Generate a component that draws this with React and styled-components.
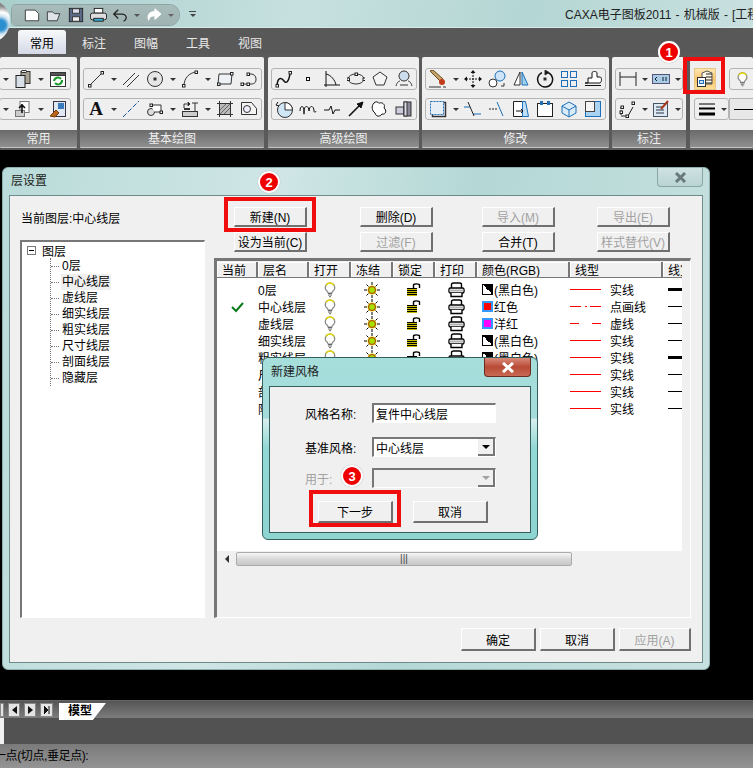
import styled, { createGlobalStyle } from "styled-components"

const GlobalStyle = createGlobalStyle`
    html, body {
        margin: 0;
        padding: 0;
        background: #000;
    }
    body {
        font-family: "Liberation Sans", "Noto Sans CJK SC", sans-serif;
        font-size: 12px;
    }
    * {
        box-sizing: border-box;
    }
`

const Page = styled.div`
    position: relative;
    width: 753px;
    height: 768px;
    overflow: hidden;
    display: flex;
    flex-direction: column;
    background: #000;
`

/* title bar */
const TitleBar = styled.div`
    position: relative;
    height: 28px;
    display: flex;
    align-items: center;
    justify-content: flex-end;
    background: linear-gradient(100deg, #a9cfcd 0%, #c6e0df 40%, #b4d6d4 70%, #c8e0df 100%);
    border-bottom: 1px solid #d8e8e8;
    white-space: nowrap;
    overflow: hidden;
`
const AppTitle = styled.div`
    width: 188px;
    padding-top: 2px;
    color: #222;
    line-height: 16px;
    word-spacing: 0.8px;
    overflow: hidden;
`
const Orb = styled.div`
    position: absolute;
    left: -28px;
    top: 0;
    width: 38px;
    height: 42px;
    border-radius: 50%;
    background: radial-gradient(circle at 75% 60%, #2b8fd0 0 5px, #cfe3f0 9px, #fff 13px, #8a8a8a 19px);
    z-index: 3;
`
const QuickBar = styled.div`
    display: flex;
    align-items: center;
    position: absolute;
    left: 12px;
    top: 5px;
    width: 167px;
    height: 20px;
    padding-left: 9px;
    border-radius: 4px 10px 10px 4px;
    background: linear-gradient(#a7bcbb, #9fb3b2);
    box-shadow: 0 0 0 1px #8fa5a4;
`
const QuickSlot = styled.div`
    width: ${p => p.$w || 22}px;
    height: 20px;
    display: flex;
    align-items: center;
    justify-content: center;
`
const MiniCaret = styled.span`
    width: 0;
    height: 0;
    border-left: 3px solid transparent;
    border-right: 3px solid transparent;
    border-top: 3px solid ${p => p.$c || "#333"};
`
const Customize = styled.div`
    position: absolute;
    left: 189px;
    top: 11px;
    width: 7px;
    border-top: 1px solid #444;
    padding-top: 2px;
    display: flex;
    justify-content: center;
`

/* tabs */
const TabBar = styled.div`
    height: 26px;
    display: flex;
    align-items: flex-end;
    padding-left: 16px;
    background: #585858;
`
const Tab = styled.div`
    width: 52px;
    height: 24px;
    display: flex;
    align-items: center;
    justify-content: center;
    position: relative;
    color: #e8e8e8;
    &::before {
        content: "";
        display: ${p => (p.$active ? "block" : "none")};
        position: absolute;
        left: 2px;
        right: 2px;
        top: 0;
        bottom: 0;
        border-radius: 3px 3px 0 0;
        background: linear-gradient(#f7f9fb, #d5d9e6);
    }
`
const TabLabel = styled.span`
    position: relative;
    color: ${p => (p.$active ? "#000" : "#e8e8e8")};
`

/* ribbon */
const Ribbon = styled.div`
    height: 96px;
    display: flex;
    padding: 3px 0 2px;
    background: #5a5a5a;
    flex: none;
`
const Panel = styled.div`
    width: ${p => p.$w}px;
    margin-left: ${p => p.$ml || 0}px;
    flex: none;
    display: flex;
    flex-direction: column;
    background: #efefef;
    border-radius: 2px;
    overflow: hidden;
    box-shadow: inset 0 -1px 0 #c4c4c4;
`
const PanelBody = styled.div`
    flex: 1;
    padding: 11px ${p => p.$pr || 0}px 0 ${p => p.$pl || 0}px;
    display: flex;
    flex-direction: column;
    align-items: ${p => (p.$end ? "flex-end" : "flex-start")};
    gap: 8px;
`
const PanelLabel = styled.div`
    height: 17px;
    margin-bottom: 1px;
    display: flex;
    align-items: center;
    justify-content: center;
    color: #eee;
    line-height: 16px;
    background: linear-gradient(#6a6a6a, #8f8f8f);
`
const IconRow = styled.div`
    display: flex;
    align-items: center;
    height: 22px;
    gap: ${p => p.$gap || 0}px;
`
const ToolGroup = styled.div`
    display: flex;
    align-items: center;
    height: 22px;
    border: 1px solid #b4b4b4;
    border-radius: 3px;
`
const Slot = styled.div`
    width: 24px;
    height: 20px;
    margin: 0 ${p => p.$m || 0}px;
    display: flex;
    align-items: center;
    justify-content: center;
`
const CaretSlot = styled.div`
    width: ${p => (p.$narrow ? 9 : 11)}px;
    height: 20px;
    display: flex;
    align-items: center;
    justify-content: center;
`
const HotButton = styled.div`
    width: 22px;
    height: 22px;
    display: flex;
    align-items: center;
    justify-content: center;
    border: 1px solid #e8c888;
    background: linear-gradient(#fde6b0, #f9c36a 55%, #fde09a);
`
const LineSelect = styled.div`
    flex: 1;
    width: 60px;
    height: 22px;
    display: flex;
    align-items: center;
    padding-left: 4px;
    background: #e8e8e8;
    border: 1px solid #b4b4b4;
    &::after {
        content: "";
        width: 30px;
        border-top: 1px solid #000;
    }
`

/* canvas and bottom bars */
const Canvas = styled.div`
    flex: 1;
    background: #000;
`
const SheetBar = styled.div`
    height: 18px;
    display: flex;
    align-items: flex-start;
    padding-top: 2px;
    gap: 4px;
    background: linear-gradient(#555, #7c7c7c);
    border-top: 1px solid #666;
`
const SheetNav = styled.div`
    width: ${p => p.$w || 12}px;
    height: 14px;
    margin-left: ${p => p.$ml || 0}px;
    display: flex;
    align-items: center;
    justify-content: center;
    background: #e4e4e4;
    border: 1px solid #888;
    color: #111;
`
const SheetTab = styled.div`
    width: 47px;
    height: 17px;
    margin-left: 2px;
    padding-left: 9px;
    font-weight: 700;
    font-size: 12px;
    line-height: 16px;
    color: #000;
    background: #fff;
    clip-path: polygon(0 0, 100% 0, 72% 100%, 0 100%);
`
const CommandArea = styled.div`
    height: 26px;
    background: #525252;
    border-left: 4px solid #f0f0f0;
`
const StatusBar = styled.div`
    height: 24px;
    display: flex;
    align-items: center;
    padding-bottom: 3px;
    background: linear-gradient(#7a7a7a, #949494);
    color: #000;
    white-space: nowrap;
    letter-spacing: -0.4px;
`
const StatusText = styled.span`
    margin-left: -6px;
`

/* windows */
const Window = styled.div`
    position: absolute;
    left: ${p => p.$x}px;
    top: ${p => p.$y}px;
    width: ${p => p.$w}px;
    height: ${p => p.$h}px;
    display: flex;
    flex-direction: column;
    border-radius: 6px;
    padding: 0 ${p => p.$pad}px ${p => p.$pad}px;
    border: 1px solid ${p => p.$edge};
    background: ${p => p.$glass};
`
const WindowHead = styled.div`
    height: ${p => p.$h}px;
    flex: none;
    display: flex;
    align-items: center;
    padding-left: 2px;
    padding-bottom: 1px;
    color: #222;
    line-height: 16px;
`
const CloseButton = styled.div`
    position: absolute;
    top: 0;
    right: ${p => p.$right}px;
    width: ${p => p.$w}px;
    height: 19px;
    display: flex;
    align-items: center;
    justify-content: center;
    border-radius: 0 0 4px 4px;
    border: 1px solid ${p => (p.$red ? "#6d2a20" : "#8aa5a5")};
    border-top: none;
    background: ${p => (p.$red ? "linear-gradient(#d88a78, #b84a36 50%, #c86a54)" : "linear-gradient(#cfe2e2, #b9d3d3)")};
`
const Client = styled.div`
    flex: 1;
    background: #f0f0f0;
    border: 1px solid ${p => p.$edge};
`
const MainClient = styled(Client)`
    display: grid;
    grid-template-columns: 185px 477px;
    grid-template-rows: 1fr 44px;
    column-gap: 9px;
    padding: 0 10px 0 10px;
`
const LeftColumn = styled.div`
    display: flex;
    flex-direction: column;
    align-items: stretch;
`
const CurrentLayer = styled.div`
    height: 44px;
    padding: 15px 0 0 1px;
    line-height: 16px;
    color: #000;
`
const Sunken = styled.div`
    border-top: 2px solid #777;
    border-left: 2px solid #777;
    border-right: 1px solid #fff;
    border-bottom: 1px solid #fff;
`
const TreeBox = styled(Sunken)`
    flex: 1;
    background: #fff;
    padding: 0 0 0 4px;
`
const TreeRoot = styled.div`
    height: 16px;
    display: flex;
    align-items: center;
    gap: 5px;
    color: #000;
`
const Plus = styled.span`
    width: 9px;
    height: 9px;
    border: 1px solid #777;
    position: relative;
    background: #fff;
    margin-left: 1px;
    margin-right: 1px;
    &::after {
        content: "";
        position: absolute;
        left: 1px;
        right: 1px;
        top: 3px;
        border-top: 1px solid #000;
    }
`
const TreeList = styled.div`
    margin-left: 24px;
    border-left: 1px dotted #777;
`
const TreeItem = styled.div`
    height: 16px;
    display: flex;
    align-items: center;
    color: #000;
    &::before {
        content: "";
        width: 8px;
        margin-right: 2px;
        border-top: 1px dotted #777;
    }
`
const TreeText = styled.span`
    padding: 0 1px;
    background: ${p => (p.$sel ? "#efefef" : "transparent")};
    line-height: 16px;
`
const RightColumn = styled.div`
    display: flex;
    flex-direction: column;
`
const ButtonGrid = styled.div`
    display: grid;
    grid-template-columns: 126px 122px 115px 73px;
    grid-auto-rows: 20px;
    row-gap: 5px;
    padding: 11px 0 6px 20px;
`
const RaisedButton = styled.div`
    width: ${p => p.$w || 73}px;
    height: ${p => p.$h || 20}px;
    display: flex;
    align-items: center;
    justify-content: center;
    background: #f0f0f0;
    color: ${p => (p.$off ? "#a2a2a2" : "#000")};
    border-top: 1px solid #fff;
    border-left: 1px solid #fff;
    border-right: 2px solid #707070;
    border-bottom: 2px solid #707070;
    white-space: nowrap;
`
const TableFrame = styled(Sunken)`
    flex: 1;
    display: flex;
    flex-direction: column;
    border-top-width: 3px;
    border-left-width: 3px;
    overflow: hidden;
`
const TableView = styled.div`
    width: 465px;
    height: 289px;
    margin-top: 1px;
    overflow: hidden;
    background: #fff;
`
const TableGrid = styled.div`
    display: grid;
    grid-template-columns: 41px 51px 42px 42px 42px 42px 93px 93px 40px;
    grid-template-rows: 19px;
    grid-auto-rows: 17px;
    width: 486px;
    color: #000;
    white-space: nowrap;
`
const HeadCell = styled.div`
    height: 16px;
    display: flex;
    align-items: center;
    padding-left: 5px;
    background: #f0f0f0;
    border-right: 2px solid #777;
    border-bottom: 1px solid #777;
    box-shadow: inset 1px 1px 0 #fff;
    overflow: hidden;
`
const Cell = styled.div`
    display: flex;
    align-items: center;
    justify-content: ${p => (p.$center ? "center" : "flex-start")};
    gap: ${p => p.$gap || 0}px;
    padding-left: ${p => p.$pl || 0}px;
    height: 17px;
`
const Swatch = styled.span`
    width: 11px;
    height: 11px;
    flex: none;
    border: 2px solid ${p => p.$border || "#3399ff"};
    background: ${p => p.$fill};
`
const HalfSwatch = styled.span`
    width: 11px;
    height: 11px;
    flex: none;
    border: 1px solid #000;
    background: linear-gradient(to bottom left, #000 50%, #fff 50%);
`
const WeightLine = styled.span`
    width: 14px;
    margin-left: 5px;
    border-top: ${p => p.$w}px solid #000;
`
const LineType = styled.span`
    width: 31px;
    flex: none;
    display: block;
    height: 1px;
    background: ${p => p.$pattern};
`
const LineName = styled.span`
    margin-left: 9px;
`
const ScrollBar = styled.div`
    width: 465px;
    height: 15px;
    display: flex;
    align-items: center;
    background: #f0f0f0;
`
const ScrollArrow = styled.div`
    width: 19px;
    display: flex;
    justify-content: center;
`
const ArrowLeft = styled.span`
    border-top: 4px solid transparent;
    border-bottom: 4px solid transparent;
    border-right: 4px solid #333;
`
const ScrollThumb = styled.div`
    width: 336px;
    height: 14px;
    display: flex;
    align-items: center;
    justify-content: center;
    color: #444;
    font-size: 10px;
    letter-spacing: 0;
    border: 1px solid #aaa;
    border-radius: 2px;
    background: linear-gradient(#f6f6f6, #d8d8d8 50%, #c8c8c8);
`
const Footer = styled.div`
    grid-column: 1 / -1;
    display: flex;
    justify-content: flex-end;
    gap: 4px;
    padding-top: 10px;
`

/* second dialog */
const FormClient = styled(Client)`
    display: flex;
    flex-direction: column;
    padding: 16px 0 0 35px;
    background: #f0f0f0;
`
const FormRow = styled.div`
    display: flex;
    align-items: center;
    height: 20px;
    margin-bottom: ${p => p.$mb}px;
`
const FormLabel = styled.div`
    width: 67px;
    color: ${p => (p.$off ? "#a2a2a2" : "#000")};
`
const Field = styled(Sunken)`
    width: 124px;
    height: 20px;
    display: flex;
    align-items: center;
    justify-content: space-between;
    padding-left: 2px;
    background: ${p => (p.$off ? "#f0f0f0" : "#fff")};
    color: #000;
`
const SelectButton = styled.div`
    width: 17px;
    height: 17px;
    display: flex;
    align-items: center;
    justify-content: center;
    background: #f0f0f0;
    border-right: 2px solid #777;
    border-bottom: 2px solid #777;
`
const SelectArrow = styled.span`
    border-left: 4px solid transparent;
    border-right: 4px solid transparent;
    border-top: 4px solid ${p => (p.$off ? "#a2a2a2" : "#000")};
`
const FormButtons = styled.div`
    display: flex;
    gap: 20px;
    padding-left: 13px;
`

/* tutorial marks */
const RedBox = styled.div`
    position: absolute;
    left: ${p => p.$x}px;
    top: ${p => p.$y}px;
    width: ${p => p.$w}px;
    height: ${p => p.$h}px;
    border: 4px solid #f00d0d;
    z-index: 8;
`
const Badge = styled.div`
    position: absolute;
    left: ${p => p.$x - 11}px;
    top: ${p => p.$y - 11}px;
    width: 22px;
    height: 22px;
    display: flex;
    align-items: center;
    justify-content: center;
    border-radius: 50%;
    border: 2px solid #fff;
    box-shadow: 0 0 1px #999;
    background: #ee0000;
    color: #fff;
    font-weight: 700;
    font-size: 13px;
    z-index: 9;
`

const Svg = ({ size = 18, children }) => (
    <svg width={size} height={size} viewBox="0 0 18 18" fill="none" stroke="#333" strokeWidth="1">
        {children}
    </svg>
)

const Nodes = ({ pts }) => pts.map(([x, y], i) => <rect key={i} x={x - 1} y={y - 1} width="2.5" height="2.5" fill="#fff" stroke="#222" />)

const icons = {
    copy: <Svg><rect x="7" y="1.5" width="9" height="12" fill="#a9a394" /><rect x="2" y="5.5" width="9" height="12" fill="#d9dfe6" stroke="#222" /><rect x="8" y="0.5" width="4" height="2" fill="#eee" /></Svg>,
    refresh: <Svg><rect x="1.5" y="2.5" width="15" height="14" fill="#fff" stroke="#333" /><rect x="1.5" y="2.5" width="15" height="3" fill="#555" /><path d="M5 11a4 4 0 0 1 7-2M13 10a4 4 0 0 1-7 3" stroke="#1b9a2c" strokeWidth="2" /></Svg>,
    paste: <Svg><rect x="6" y="1.5" width="9" height="11" fill="#fff" stroke="#777" /><rect x="1.5" y="10.5" width="9" height="6" fill="#ccc" stroke="#777" /><path d="M8 4v9M5 8l3-3 3 3" stroke="#111" strokeWidth="1.6" /></Svg>,
    brush: <Svg><rect x="4.5" y="1.5" width="12" height="15" fill="#dfe8f2" stroke="#334" /><rect x="9" y="3" width="6" height="6" fill="#3a78c0" stroke="none" /><path d="M1 16l6-6 3 3-4 4z" fill="#b8641a" stroke="#7a3f0c" /></Svg>,
    line: <Svg><path d="M3 15L15 3" /><Nodes pts={[[2.5, 15.5], [15, 2.5]]} /></Svg>,
    dbl: <Svg><path d="M1 15L13 3M5 17L17 5" /></Svg>,
    circle: <Svg><circle cx="9" cy="9" r="7.5" fill="#e6e6e6" /><rect x="8" y="8" width="2" height="2" fill="#333" /></Svg>,
    arc: <Svg><path d="M3 16C3 8 8 3 15 2" /><Nodes pts={[[2.5, 15.5], [15, 2]]} /></Svg>,
    rect: <Svg><path d="M3 4h13l-1 10H2z" fill="#eef2f6" /><Nodes pts={[[2.5, 14], [15.5, 3.5]]} /></Svg>,
    link: <Svg><path d="M3 14h8c4 0 5-2 5-5s-2-5-5-5H9" /><Nodes pts={[[2, 14], [8, 14], [8, 4]]} /></Svg>,
    text: <span style={{ fontFamily: "Liberation Serif, serif", fontWeight: 700, fontSize: 19, lineHeight: "20px", color: "#111" }}>A</span>,
    dash: <Svg><path d="M1 17L17 1" stroke="#1c4f9a" strokeDasharray="5 2" /></Svg>,
    wheel: <Svg><circle cx="5" cy="12" r="3.5" fill="#ddd" /><path d="M5 5h10v7H8" fill="#fff" /><Nodes pts={[[15, 12], [5, 5]]} /></Svg>,
    tool: <Svg><rect x="1.5" y="11.5" width="15" height="5" fill="#ccc" /><path d="M3 8V4h3M11 3h6M14 3v8" /><path d="M3 9h6" strokeWidth="2" /><path d="M7 2l2 2-2 2z" fill="#111" /></Svg>,
    hatch: <Svg><rect x="3.5" y="3.5" width="11" height="11" fill="#bbb" /><path d="M3.5 1v16M14.5 1v16M1 3.5h16M1 14.5h16" /><path d="M4 10l6-6M4 14l10-10M8 14l6-6" stroke="#666" /></Svg>,
    block: <Svg><path d="M1.5 2.5h10l5 6v6h-15z" fill="#f4f4f4" /><circle cx="7" cy="9" r="3.5" fill="#eef" /></Svg>,
    curve: <Svg><path d="M2 15C3 6 7 8 9 11s5 1 6-8" strokeWidth="1.5" stroke="#111" /><Nodes pts={[[2, 15.5], [15, 2.5]]} /></Svg>,
    point: <Svg><rect x="7.5" y="7.5" width="3" height="3" fill="#fff" stroke="#111" /></Svg>,
    axes: <Svg><path d="M3 1v16M1 15h16M3 4c5 1 9 6 10 11" stroke="#111" /></Svg>,
    ellipse: <Svg><ellipse cx="9" cy="9" rx="8" ry="5" fill="#eee" /><Nodes pts={[[1, 9], [9, 4], [17, 9]]} /></Svg>,
    pentagon: <Svg><path d="M9 2l7 5-3 8H5L2 7z" fill="#f4f4f4" /></Svg>,
    bubble: <Svg><circle cx="9" cy="6" r="5" fill="#cde" /><path d="M1 16c1-4 3-5 4-5M17 16c-1-4-3-5-4-5M5 15h8" /></Svg>,
    spiral: <Svg><circle cx="10" cy="10" r="7.5" fill="#cfe6f6" /><path d="M10 2.5V10h7.5A7.5 7.5 0 0 0 10 2.5z" fill="#fff" /><path d="M3 2l-2 3 3 1" stroke="#111" /></Svg>,
    wave: <Svg><path d="M1 11c0-6 4-6 4 0s0 2 0 0c0-6 5-6 5 0 0-6 5-6 5 0 0 2 2 1 2 0" stroke="#111" /></Svg>,
    pulse: <Svg><path d="M1 10h5l2-4 2 8 2-4h5" stroke="#111" /></Svg>,
    needle: <Svg><path d="M2 16L12 6" stroke="#111" strokeWidth="1.6" /><path d="M10 4l4 4 2-6z" fill="#111" stroke="#111" /></Svg>,
    puzzle: <Svg><path d="M3 3c3-3 5 1 6 0s6 1 4 5c3 2 2 7-2 6-2 3-6 3-7-1-3-2-4-7-1-10z" fill="#fff" stroke="#111" /></Svg>,
    barrel: <Svg><rect x="1" y="7" width="8" height="7" fill="#ccd" /><rect x="9" y="2" width="7" height="14" fill="#889" /><rect x="9" y="2" width="3" height="14" fill="#dde" /></Svg>,
    pen: <Svg><path d="M1 1l10 10 3-2L4 0z" fill="#c6a46a" stroke="#6a4a1c" /><circle cx="13" cy="12" r="3" fill="#c33c1a" stroke="none" /><path d="M0 17h12M14 17h3" /></Svg>,
    move: <Svg><path d="M9 2v14M2 9h14" stroke="#111" strokeDasharray="2 1" /><path d="M9 0l2.5 3h-5zM9 18l2.5-3h-5zM0 9l3-2.5v5zM18 9l-3-2.5v5z" fill="#111" stroke="none" /></Svg>,
    scale: <Svg><circle cx="5" cy="13" r="4" fill="#fff" /><circle cx="12" cy="6" r="5" fill="#cfe4f6" stroke="#1c6fb8" /><path d="M13 16h3v-3" /></Svg>,
    mirror: <Svg><path d="M8 2L2 15h6z" fill="#fff" /><path d="M10 2l6 13h-6z" fill="#9fd0f0" stroke="#1c6fb8" /></Svg>,
    rotate: <Svg><path d="M12 2.5A7.5 7.5 0 1 1 6 2.6" strokeWidth="1.5" stroke="#111" /><path d="M9 0l4 2.5-4 2.5z" fill="#111" /><rect x="8" y="8" width="2" height="2" fill="#111" /></Svg>,
    array: <Svg><rect x="1.5" y="1.5" width="6" height="6" stroke="#1c6fb8" /><rect x="10.5" y="1.5" width="6" height="6" stroke="#1c6fb8" /><rect x="1.5" y="10.5" width="6" height="6" stroke="#1c6fb8" /><rect x="10.5" y="10.5" width="6" height="6" stroke="#1c6fb8" /></Svg>,
    cloud: <Svg><path d="M1 13h3V8h4V3c0-2 5-2 5 0v4h3c2 0 2 5 0 6z" fill="#fff" stroke="#111" /><path d="M1 15.5h16" stroke="#111" /></Svg>,
    frame: <Svg><rect x="3.5" y="2.5" width="13" height="14" fill="#eef" stroke="#333" strokeWidth="1.5" /><rect x="1.5" y="1.5" width="13" height="13" fill="#e8eef5" stroke="#1c6fb8" strokeDasharray="2 1" /></Svg>,
    trimL: <Svg><path d="M0 7h6M9 14h8" stroke="#1c6fb8" /><path d="M4 2l6 14" stroke="#222" /></Svg>,
    trimR: <Svg><path d="M1 9h8" stroke="#222" strokeDasharray="2 1" /><path d="M9 2l6 14" stroke="#1c6fb8" /></Svg>,
    doc: <Svg><path d="M1.5 1.5h9v15h-9z" fill="#fff" stroke="#222" /><path d="M10.5 1.5h3l3 15h-6z" fill="#bfe0f6" stroke="#1c6fb8" /><path d="M4 11h7M9 9l2 2-2 2" stroke="#111" /></Svg>,
    tray: <Svg><rect x="1.5" y="3.5" width="15" height="13" fill="#fff" stroke="#222" /><rect x="4" y="1" width="3" height="4" fill="#1c6fb8" stroke="none" /><rect x="11" y="1" width="3" height="4" fill="#1c6fb8" stroke="none" /></Svg>,
    cube: <Svg><path d="M2 6l7-4 7 4v7l-7 4-7-4z" fill="#d9ecf8" stroke="#1c6fb8" /><path d="M2 6l7 4 7-4M9 10v7" stroke="#1c6fb8" /></Svg>,
    corner: <Svg><rect x="1.5" y="1.5" width="15" height="15" fill="#a9d3f0" stroke="#1c6fb8" /><rect x="1.5" y="1.5" width="9" height="10" fill="#f4f4f4" stroke="#444" /></Svg>,
    dim: <Svg><path d="M1 2v14M17 2v14M1 7h16" stroke="#222" /></Svg>,
    dimNum: <Svg><rect x="0.5" y="4.5" width="17" height="9" fill="#a9cbe6" stroke="#557" /><path d="M5 7l-2 2 2 2M11 7v4M14 7v4" stroke="#123" /></Svg>,
    coords: <Svg><path d="M2 16h7l5-9" stroke="#222" /><path d="M2 7v9" stroke="#222" strokeDasharray="2 1" /><Nodes pts={[[2, 12], [3, 7], [8, 16], [14, 3]]} /></Svg>,
    note: <Svg><rect x="1.5" y="3.5" width="14" height="13" fill="#dfe9f4" stroke="#456" /><path d="M4 7h6M4 10h8M4 13h8" stroke="#234" /><path d="M9 9l7-8" stroke="#a8381c" strokeWidth="2" /></Svg>,
    layers: <Svg><path d="M6 8V3l5-2 5 2v11H9" fill="#fff8e4" stroke="#555" /><path d="M10 4h6M10 7h6M10 10h6M10 13h6" stroke="#222" /><rect x="1.5" y="7.5" width="8" height="9" fill="#fff" stroke="#333" /><rect x="3.5" y="10.5" width="4" height="3" fill="#cfe4f6" stroke="#1c6fb8" /></Svg>,
    weights: <Svg><path d="M1 4h16" stroke="#000" /><path d="M1 8.5h16" stroke="#000" strokeWidth="2" /><path d="M1 14h16" stroke="#000" strokeWidth="3" /></Svg>,
}

const Bulb = ({ size = 14 }) => (
    <svg width={size} height={size + 2} viewBox="0 0 12 16" fill="none">
        <path d="M6 1a4.5 4.5 0 0 0-3 8c.7.7 1 1.5 1 2h4c0-.5.3-1.3 1-2a4.5 4.5 0 0 0-3-8z" fill="#fff" stroke="#8a8a8a" strokeWidth="1.2" />
        <path d="M2 3.500A4.500 4.500 0 0 1 10 3.500" stroke="#e6d800" strokeWidth="1.400" />
        <path d="M4 11.500h4M4 13h4M5 14.700h2" stroke="#666" />
    </svg>
)
const Sun = ({ size = 16 }) => (
    <svg width={size} height={size} viewBox="0 0 16 16">
        <path d="M8 0v3M8 13v3M0 8h3M13 8h3M2.500 2.500l2 2M11.500 11.500l2 2M13.500 2.500l-2 2M4.500 11.500l-2 2" stroke="#000" strokeWidth="1" />
        <circle cx="8" cy="8" r="4.500" fill="#e8d800" />
        <circle cx="8" cy="8" r="3.500" fill="#a8e000" stroke="#a01010" strokeWidth="0.800" />
    </svg>
)
const Lock = () => (
    <svg width="14" height="13" viewBox="0 0 14 13">
        <rect x="0" y="5" width="10" height="8" fill="#000" />
        <path d="M0 6.500h10M0 8.500h10M0 10.500h10M0 12.500h10" stroke="#c8bc00" />
        <path d="M6.500 5V2c0-1.500 6-1.500 6 0v3" fill="none" stroke="#000" strokeWidth="1.400" />
    </svg>
)
const Printer = () => (
    <svg width="17" height="16" viewBox="0 0 17 16" fill="none" stroke="#000" strokeWidth="1.400">
        <path d="M3.500 6V2.500c0-1 1-1.500 2-1.500h6c1 0 2 .5 2 1.500V6" fill="#fff" />
        <rect x="1" y="6" width="15" height="5" rx="1.500" fill="#fff" />
        <rect x="1.500" y="7.500" width="14" height="2" fill="#b4b4b4" stroke="none" />
        <path d="M3 11v3.500h11V11" fill="#fff" />
    </svg>
)
const Check = () => (
    <svg width="14" height="12" viewBox="0 0 14 12" fill="none">
        <path d="M1 6l4 4 7-8" stroke="#0a7a1a" strokeWidth="2" />
    </svg>
)

const ToolIcons = ({ items }) =>
    items.map((name, i) =>
        name === "^" ? (
            <CaretSlot key={i}><MiniCaret /></CaretSlot>
        ) : name === "v" ? (
            <CaretSlot key={i} $narrow><MiniCaret /></CaretSlot>
        ) : (
            <Slot key={i}>{icons[name]}</Slot>
        )
    )

const quickIcons = {
    file: <Svg size={16}><path d="M1.5 3.5h11l4 4v8h-15z" fill="#fff" stroke="#333" /></Svg>,
    open: <Svg size={16}><path d="M1.5 5.5h6l2 2h6l-3 8h-11z" fill="#dfe4e8" stroke="#333" /></Svg>,
    save: <Svg size={16}><rect x="1.5" y="1.5" width="15" height="15" fill="#5a6a86" stroke="#222" /><rect x="5" y="2" width="8" height="5" fill="#dde" /><rect x="5" y="11" width="8" height="5" fill="#eee" /></Svg>,
    print: <Svg size={17}><rect x="4.5" y="1.5" width="9" height="5" fill="#fff" stroke="#222" /><rect x="0.5" y="6.5" width="17" height="7" rx="2" fill="#ddd" stroke="#222" /><rect x="4" y="12" width="10" height="3" fill="#3ab0d8" stroke="#222" /></Svg>,
    undo: <Svg size={16}><path d="M7 3L2 8l5 5M2 8h9c3 0 5 2 5 4s-1 3-3 4" stroke="#222" strokeWidth="1.5" /></Svg>,
    redo: <Svg size={16}><path d="M10 2l7 6-7 6v-4c-4 0-6 1-7 5-2-5 0-10 7-10z" fill="#fff" stroke="#fff" /></Svg>,
}

const rows = [
    { name: "0层", color: <><HalfSwatch />(黑白色)</>, line: "#f00", type: "实线", weight: 3, current: false },
    { name: "中心线层", color: <><Swatch $fill="#f00" />红色</>, line: "linear-gradient(to right, #f00 0 11px, transparent 11px 15px, #f00 15px 17px, transparent 17px 20px, #f00 20px 31px)", type: "点画线", weight: 1, current: true },
    { name: "虚线层", color: <><Swatch $fill="#f0f" />洋红</>, line: "linear-gradient(to right, #f00 0 9px, transparent 9px 22px, #f00 22px 31px)", type: "虚线", weight: 1 },
    { name: "细实线层", color: <><HalfSwatch />(黑白色)</>, line: "#f00", type: "实线", weight: 1 },
    { name: "粗实线层", color: <><HalfSwatch />(黑白色)</>, line: "#f00", type: "实线", weight: 3 },
    { name: "尺寸线层", color: <><Swatch $fill="#f00" />红色</>, line: "#f00", type: "实线", weight: 1 },
    { name: "剖面线层", color: <><Swatch $fill="#f00" />红色</>, line: "#f00", type: "实线", weight: 1 },
    { name: "隐藏层", color: <><Swatch $fill="#f00" />红色</>, line: "#f00", type: "实线", weight: 1 },
]

const treeNames = ["0层", "中心线层", "虚线层", "细实线层", "粗实线层", "尺寸线层", "剖面线层", "隐藏层"]
const columns = ["当前", "层名", "打开", "冻结", "锁定", "打印", "颜色(RGB)", "线型", "线宽"]

const LayerTable = () => (
    <TableView>
        <TableGrid>
            {columns.map(c => <HeadCell key={c}>{c}</HeadCell>)}
            {rows.map(r => [
                <Cell key={r.name + "c"} $center>{r.current && <Check />}</Cell>,
                <Cell key={r.name + "n"}>{r.name}</Cell>,
                <Cell key={r.name + "o"} $center><Bulb /></Cell>,
                <Cell key={r.name + "f"} $center><Sun /></Cell>,
                <Cell key={r.name + "l"} $center><Lock /></Cell>,
                <Cell key={r.name + "p"} $center><Printer /></Cell>,
                <Cell key={r.name + "r"} $pl={5} $gap={1}>{r.color}</Cell>,
                <Cell key={r.name + "t"}><LineType $pattern={r.line} /><LineName>{r.type}</LineName></Cell>,
                <Cell key={r.name + "w"}><WeightLine $w={r.weight} /></Cell>,
            ])}
        </TableGrid>
    </TableView>
)

const NewStyleDialog = () => (
    <Window $x={259} $y={189} $w={276} $h={183} $pad={6} $edge="#33605f" $glass="linear-gradient(#a6dedc, #a3dcda 33%, #d6eeec 34%, #92d8d5 50%, #8ed5d2)">
        <WindowHead $h={28}>新建风格</WindowHead>
        <CloseButton $red $right={6} $w={47}>
            <svg width="14" height="11" viewBox="0 0 14 11"><path d="M2 1l10 9M12 1L2 10" stroke="#fff" strokeWidth="3" /></svg>
        </CloseButton>
        <FormClient $edge="#33605f">
            <FormRow $mb={14}>
                <FormLabel>风格名称:</FormLabel>
                <Field>复件中心线层</Field>
            </FormRow>
            <FormRow $mb={11}>
                <FormLabel>基准风格:</FormLabel>
                <Field>中心线层<SelectButton><SelectArrow /></SelectButton></Field>
            </FormRow>
            <FormRow $mb={13}>
                <FormLabel $off>用于:</FormLabel>
                <Field $off><span /><SelectButton><SelectArrow $off /></SelectButton></Field>
            </FormRow>
            <FormButtons>
                <RaisedButton $w={75} $h={22}>下一步</RaisedButton>
                <RaisedButton $w={75} $h={22}>取消</RaisedButton>
            </FormButtons>
        </FormClient>
    </Window>
)

const LayerDialog = () => (
    <Window $x={2} $y={167} $w={708} $h={503} $pad={6} $edge="#8fb0b0" $glass="linear-gradient(100deg, #b9dbd9, #cfe6e5 35%, #b4d8d6 60%, #c7e1e0)">
        <WindowHead $h={27}>层设置</WindowHead>
        <CloseButton $right={6} $w={46}>
            <svg width="13" height="11" viewBox="0 0 13 11"><path d="M2 1l9 9M11 1l-9 9" stroke="#6a7a7a" strokeWidth="3" /></svg>
        </CloseButton>
        <MainClient $edge="#6f8a8a">
            <LeftColumn>
                <CurrentLayer>当前图层:中心线层</CurrentLayer>
                <TreeBox>
                    <TreeRoot><Plus />图层</TreeRoot>
                    <TreeList>
                        {treeNames.map((n, i) => (
                            <TreeItem key={n}><TreeText $sel={i === 1}>{n}</TreeText></TreeItem>
                        ))}
                    </TreeList>
                </TreeBox>
            </LeftColumn>
            <RightColumn>
                <ButtonGrid>
                    <RaisedButton>新建(N)</RaisedButton>
                    <RaisedButton>删除(D)</RaisedButton>
                    <RaisedButton $off>导入(M)</RaisedButton>
                    <RaisedButton $off>导出(E)</RaisedButton>
                    <RaisedButton>设为当前(C)</RaisedButton>
                    <RaisedButton $off>过滤(F)</RaisedButton>
                    <RaisedButton>合并(T)</RaisedButton>
                    <RaisedButton $off>样式替代(V)</RaisedButton>
                </ButtonGrid>
                <TableFrame>
                    <LayerTable />
                    <ScrollBar>
                        <ScrollArrow><ArrowLeft /></ScrollArrow>
                        <ScrollThumb>|||</ScrollThumb>
                    </ScrollBar>
                </TableFrame>
            </RightColumn>
            <Footer>
                <RaisedButton $w={75} $h={23}>确定</RaisedButton>
                <RaisedButton $w={75} $h={23}>取消</RaisedButton>
                <RaisedButton $w={72} $h={23} $off>应用(A)</RaisedButton>
            </Footer>
        </MainClient>
        <NewStyleDialog />
    </Window>
)

const ribbonPanels = [
    { label: "常用", w: 77, end: true, pr: 6, rows: [["^", "copy", "^", "refresh"], ["^", "paste", "^", "brush"]] },
    { label: "基本绘图", w: 184, ml: 3, pl: 3, rows: [["line", "^", "dbl", "circle", "^", "arc", "^", "rect", "link"], ["text", "^", "dash", "wheel", "^", "tool", "^", "hatch", "block"]] },
    { label: "高级绘图", w: 151, ml: 4, pl: 3, rows: [["curve", "point", "axes", "ellipse", "pentagon", "bubble"], ["spiral", "wave", "pulse", "needle", "puzzle", "barrel"]] },
    { label: "修改", w: 187, ml: 3, pl: 3, rows: [["pen", "^", "move", "scale", "mirror", "rotate", "array", "cloud"], ["frame", "^", "trimL", "trimR", "doc", "tray", "cube", "corner"]] },
    { label: "标注", w: 74, ml: 3, pl: 3, rows: [["dim", "v", "dimNum", "v"], ["coords", "v", "note", "v"]] },
]

const App = () => (
    <>
        <GlobalStyle />
        <Page>
            <TitleBar>
                <QuickBar>
                    <QuickSlot>{quickIcons.file}</QuickSlot>
                    <QuickSlot>{quickIcons.open}</QuickSlot>
                    <QuickSlot>{quickIcons.save}</QuickSlot>
                    <QuickSlot>{quickIcons.print}</QuickSlot>
                    <QuickSlot>{quickIcons.undo}</QuickSlot>
                    <QuickSlot $w={12}><MiniCaret $c="#555" /></QuickSlot>
                    <QuickSlot>{quickIcons.redo}</QuickSlot>
                    <QuickSlot $w={12}><MiniCaret $c="#666" /></QuickSlot>
                </QuickBar>
                <Customize><MiniCaret $c="#444" /></Customize>
                <AppTitle>CAXA电子图板2011 - 机械版 - [工程</AppTitle>
            </TitleBar>
            <Orb />
            <TabBar>
                <Tab $active><TabLabel $active>常用</TabLabel></Tab>
                <Tab><TabLabel>标注</TabLabel></Tab>
                <Tab><TabLabel>图幅</TabLabel></Tab>
                <Tab><TabLabel>工具</TabLabel></Tab>
                <Tab><TabLabel>视图</TabLabel></Tab>
            </TabBar>
            <Ribbon>
                {ribbonPanels.map(p => (
                    <Panel key={p.label} $w={p.w} $ml={p.ml}>
                        <PanelBody $end={p.end} $pr={p.pr} $pl={p.pl}>
                            {p.rows.map((r, i) => (
                                <ToolGroup key={i}><ToolIcons items={r} /></ToolGroup>
                            ))}
                        </PanelBody>
                        <PanelLabel>{p.label}</PanelLabel>
                    </Panel>
                ))}
                <Panel $w={63} $ml={4}>
                    <PanelBody $pl={4}>
                        <IconRow $gap={13}>
                            <HotButton>{icons.layers}</HotButton>
                            <ToolGroup><Slot><Bulb size={13} /></Slot><Slot><Sun /></Slot></ToolGroup>
                        </IconRow>
                        <IconRow>
                            <ToolGroup><Slot>{icons.weights}</Slot><CaretSlot $narrow><MiniCaret /></CaretSlot></ToolGroup>
                            <LineSelect />
                        </IconRow>
                    </PanelBody>
                    <PanelLabel />
                </Panel>
            </Ribbon>
            <Canvas />
            <SheetBar>
                <SheetNav $w={4} />
                <SheetNav><svg width="5" height="8"><path d="M5 0v8L0 4z" fill="#111" /></svg></SheetNav>
                <SheetNav><svg width="5" height="8"><path d="M0 0v8l5-4z" fill="#111" /></svg></SheetNav>
                <SheetNav $w={13}><svg width="6" height="8"><path d="M0 0v8l4-4zM5 0v8" fill="#111" stroke="#111" /></svg></SheetNav>
                <SheetTab>模型</SheetTab>
            </SheetBar>
            <CommandArea />
            <StatusBar><StatusText>一点(切点,垂足点):</StatusText></StatusBar>
            <LayerDialog />
            <RedBox $x={683} $y={57} $w={42} $h={37} />
            <RedBox $x={224} $y={197} $w={92} $h={35} />
            <RedBox $x={309} $y={490} $w={92} $h={37} />
            <Badge $x={669} $y={52}>1</Badge>
            <Badge $x={269} $y={182}>2</Badge>
            <Badge $x={352} $y={476}>3</Badge>
        </Page>
    </>
)

export default App
